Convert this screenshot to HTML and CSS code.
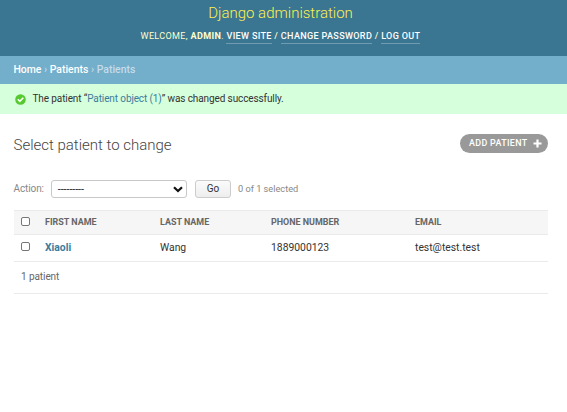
FILE: index.html
```html
<!DOCTYPE html>
<html lang="en">
<head>
<meta charset="utf-8">
<title>Select patient to change</title>
<link rel="stylesheet" href="styles.css">
</head>
<body>
<header class="header">
  <h1 class="brand">Django administration</h1>
  <div class="user-tools"><span class="welcome">Welcome, <strong>admin</strong>.</span> <a class="tool">View site</a> / <a class="tool">Change password</a> / <a class="tool">Log out</a></div>
</header>
<nav class="breadcrumbs"><span><a>Home</a> › <a>Patients</a> › Patients</span></nav>
<div class="message">
  <svg class="check" viewBox="0 0 11 11"><circle cx="5.5" cy="5.5" r="5.3" fill="#55c92f"/><path d="M2.8 5.3 4.8 7.3 8.3 3.8" fill="none" stroke="#fff" stroke-width="1.6"/></svg>
  <span class="message-text">The patient “<a>Patient object (1)</a>” was changed successfully.</span>
</div>
<main class="content">
  <div class="heading">
    <h2 class="title">Select patient to change</h2>
    <a class="add"><span class="add-text">Add patient</span><svg class="plus" viewBox="0 0 9 9"><path d="M4.5 .5v8M.5 4.5h8" stroke="#fff" stroke-width="2.2"/></svg></a>
  </div>
  <div class="actions">
    <span class="action-label">Action:</span>
    <div class="select"><span class="dashes">---------</span><svg class="chevron" viewBox="0 0 10 7"><path d="M1 1.2 5 5 9 1.2" fill="none" stroke="#111" stroke-width="2.2"/></svg></div>
    <button class="go">Go</button>
    <span class="count">0 of 1 selected</span>
  </div>
  <div class="row head"><i class="box"></i><span class="c1">First name</span><span class="c2">Last name</span><span class="c3">Phone number</span><span class="c4">Email</span></div>
  <div class="row item"><i class="box"></i><a class="c1">Xiaoli</a><span class="c2">Wang</span><span class="c3">1889000123</span><span class="c4">test@test.test</span></div>
  <div class="paginator"><span class="total">1 patient</span></div>
</main>
</body>
</html>
```
FILE: styles.css
```css
* { box-sizing: border-box; }
body { margin: 0; background: #fff; color: #333; font: 10px/14px Roboto, sans-serif; }
svg { display: block; flex: none; }
.header { height: 56px; background: #3a7591; color: #ffc; text-align: center; padding: 3px 6px 0 0; }
.brand { margin: 0; font-size: 15px; line-height: 20px; font-weight: 300; color: #fdf04f; }
.user-tools { margin-top: 6px; font-size: 9.05px; line-height: 14px; letter-spacing: .34px; text-transform: uppercase; }
.welcome { font-weight: 400; }
.tool { display: inline-block; line-height: 13px; color: #fff; border-bottom: 1px solid #709bb0; }
.breadcrumbs { display: flex; align-items: center; height: 28px; padding-left: 13.4px; background: #73aecb; color: #c4dce8; font-size: 10.45px; }
.breadcrumbs a { color: #fff; }
.breadcrumbs, .user-tools { font-weight: 500; }
.message { display: flex; align-items: center; height: 30px; padding-left: 14.5px; gap: 7px; background: #d6ffdc; color: #333; font-size: 10px; letter-spacing: -.11px; }
.message a { color: #3b7c9c; }
.check { width: 11px; height: 11px; }
.content { padding: 20px 19px 0 14px; }
.heading { display: flex; justify-content: space-between; height: 46px; }
.title { margin: 1px 0 0 -.5px; font-size: 15px; line-height: 20px; font-weight: 300; color: #444; }
.add { display: flex; align-items: center; justify-content: space-between; width: 88px; height: 19px; padding: 0 6px 1px 9px; border-radius: 10px; background: #999; color: #fff; font-size: 8.9px; font-weight: 500; letter-spacing: .36px; text-transform: uppercase; }
.plus { width: 9px; height: 9px; }
.actions { display: flex; align-items: center; height: 18px; color: #888; font-size: 9.2px; }
.action-label { width: 37px; font-size: 10px; letter-spacing: -.1px; text-indent: -.5px; }
.select { display: flex; align-items: center; justify-content: space-between; width: 136px; height: 18px; padding: 0 3px 0 6px; border: 1px solid #c8c8c8; border-radius: 3px; color: #222; }
.dashes { font-size: 9px; letter-spacing: .42px; -webkit-text-stroke: .2px #222; }
.chevron { width: 10px; height: 7px; }
.go { width: 36px; height: 18px; margin: 0 7px 0 8px; padding: 0; border: 1px solid #ccc; border-radius: 3px; background: linear-gradient(#fbfbfb, #eee); color: #333; font: 10px/14px Roboto, sans-serif; }
.row { display: grid; grid-template-columns: 24px 115px 111px 144px 1fr; align-items: center; padding-left: 7px; border-bottom: 1px solid #eaeaea; }
.head { height: 25px; margin-top: 12px; padding-bottom: 1px; background: #f6f6f6; border-top: 1px solid #eaeaea; color: #666; font-size: 8.95px; font-weight: 700; text-transform: uppercase; }
.item { height: 27px; font-size: 10.35px; }
.item .c1 { color: #3b7c9c; font-weight: 700; }
.box { width: 9px; height: 9px; border: 1px solid #767676; border-radius: 2px; background: #fff; }
.head .box { margin-bottom: 1px; }
.item .box { margin-bottom: 3px; }
.paginator { display: flex; align-items: center; height: 32px; padding: 0 0 2px 7px; border-bottom: 1px solid #eaeaea; color: #666; font-size: 10px; letter-spacing: -.08px; }
```
